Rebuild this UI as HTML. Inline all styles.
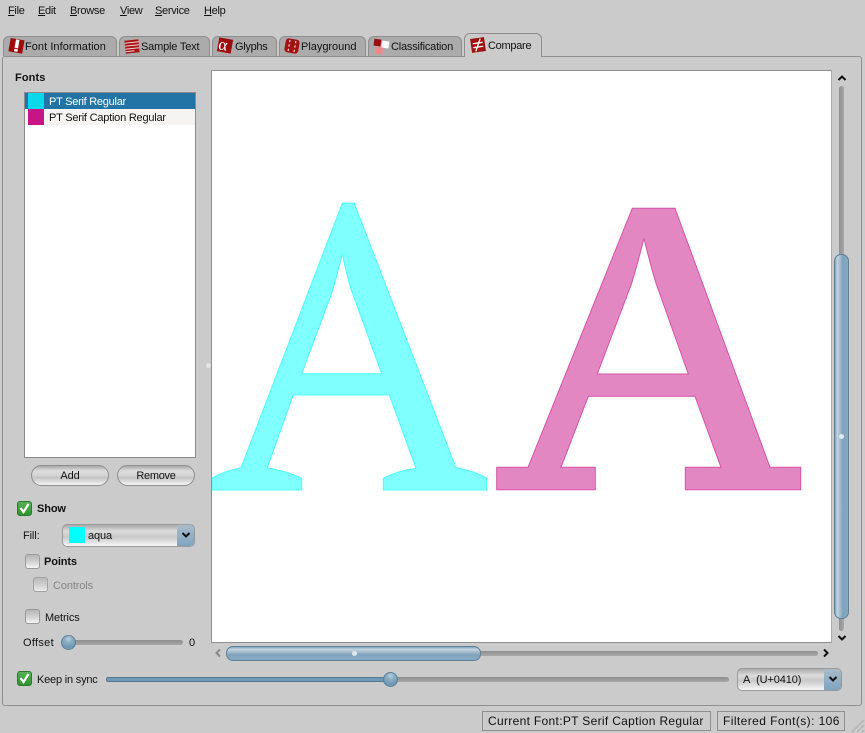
<!DOCTYPE html>
<html><head><meta charset="utf-8">
<style>
html,body{margin:0;padding:0;background:#cbcbcb;}
#r{position:relative;width:865px;height:733px;overflow:hidden;background:#cbcbcb;font-family:"Liberation Sans",sans-serif;font-size:11px;color:#111;letter-spacing:-.12px;}
#r div,#r span.a{position:absolute;}
.t{white-space:nowrap;line-height:14px;}
.m{top:4px;letter-spacing:-.3px;}
u{text-decoration:underline;}
.tab{top:36px;height:20px;background:#ababab;border:1px solid #8e8e8e;border-bottom:none;border-radius:6px 6px 0 0;box-sizing:border-box;}
.btn{height:21px;border:1px solid #8f8f8f;border-radius:11px;box-sizing:border-box;background:linear-gradient(#a9a9a9 0,#dcdcdc 25%,#d4d4d4 50%,#c2c2c2 60%,#f4f4f4 100%);text-align:center;line-height:20px;}
.cb{width:15px;height:15px;border:1px solid #999;border-radius:3px;box-sizing:border-box;background:linear-gradient(#b5b5b5,#d0d0d0 50%,#f4f4f4);}
.cbg{width:15px;height:15px;border:1px solid #2c7a2c;border-radius:3px;box-sizing:border-box;background:linear-gradient(#58b058,#2d942d);}
.bl{font-weight:bold;}
.combo{border:1px solid #9a9a9a;border-radius:5px;box-sizing:border-box;background:linear-gradient(#a9a9a9 0,#dcdcdc 30%,#c8c8c8 55%,#f6f6f6 100%);overflow:hidden;}
.cbtn{right:0;top:0;bottom:0;width:17px;background:linear-gradient(#a9bccb,#7fa4bf);}
.tr{background:linear-gradient(#8d8d8d,#a7a7a7);border-radius:3px;}
.knob{width:15px;height:15px;border-radius:50%;border:1px solid #5f8299;box-sizing:border-box;background:radial-gradient(circle at 50% 22%,#b9cfdd 0,#8fb0c5 30%,#6f97b2 70%,#7ea4bd 100%);}
</style></head><body>
<div id="r">
<div class="t m" style="left:8px"><u>F</u>ile</div>
<div class="t m" style="left:38px"><u>E</u>dit</div>
<div class="t m" style="left:70px"><u>B</u>rowse</div>
<div class="t m" style="left:120px"><u>V</u>iew</div>
<div class="t m" style="left:155px"><u>S</u>ervice</div>
<div class="t m" style="left:204px"><u>H</u>elp</div>

<!-- panel -->
<div style="left:2px;top:56px;width:860px;height:650px;border:1px solid #8f8f8f;border-radius:3px;box-sizing:border-box;"></div>

<!-- tabs -->
<div class="tab" style="left:3px;width:114px"></div>
<div class="tab" style="left:119px;width:91px"></div>
<div class="tab" style="left:212px;width:65px"></div>
<div class="tab" style="left:279px;width:87px"></div>
<div class="tab" style="left:368px;width:94px"></div>
<div class="tab" style="left:464px;top:33px;height:24px;width:78px;background:#cbcbcb;"></div>
<div style="left:465px;top:55px;width:76px;height:3px;background:#cbcbcb"></div>

<svg class="a" style="position:absolute;left:0;top:0" width="865" height="64">
<g transform="rotate(10 16 45.500)"><rect x="9.500" y="39" width="14" height="13.500" fill="#9c0e0e"/><rect x="15" y="39.500" width="3.500" height="8.500" fill="#fff"/><rect x="15" y="49" width="3.500" height="2.500" fill="#fff"/></g>
<g transform="rotate(-6 132 46.500)"><rect x="125" y="40" width="14" height="13" fill="#a81414"/><path d="M125 42.500h14M125 45.500h14M125 48.500h14M125 51h9" stroke="#f3d5d5" stroke-width="1"/></g>
<g transform="rotate(10 225 45.500)"><rect x="218" y="38.500" width="14" height="14" fill="#9c0e0e"/><text x="218.500" y="50.500" font-family="Liberation Serif,serif" font-size="17" fill="#fff">α</text></g>
<g transform="rotate(10 292 46)"><rect x="285" y="39" width="14" height="14" rx="3" fill="#a31212"/><path d="M288.500 41.500h1M294.500 41.500h1M288.500 46h1M294.500 46h1M288.500 50.500h1M294.500 50.500h1" stroke="#fff" stroke-width="2.200"/></g>
<g><rect x="374" y="39" width="7" height="7" fill="#9c0e0e" transform="rotate(8 377 42)"/><rect x="382" y="41" width="7" height="7" fill="#fff" transform="rotate(8 385 44)"/><rect x="376" y="47" width="7" height="7" fill="#f08a8a" transform="rotate(8 379 50)"/></g>
<g transform="rotate(-8 478 45)"><rect x="471" y="38" width="14" height="14" fill="#a01010"/><path d="M473 43h10M473 47h10M481 39l-6 12" stroke="#fff" stroke-width="1.300" fill="none"/></g>
</svg>

<div class="t" style="left:25px;top:40px;letter-spacing:.05px">Font Information</div>
<div class="t" style="left:141px;top:40px;letter-spacing:-.18px">Sample Text</div>
<div class="t" style="left:235px;top:40px;letter-spacing:-.3px">Glyphs</div>
<div class="t" style="left:301px;top:40px;letter-spacing:-.02px">Playground</div>
<div class="t" style="left:391px;top:40px;letter-spacing:-.2px">Classification</div>
<div class="t" style="left:488px;top:39px;letter-spacing:-.28px">Compare</div>

<!-- fonts list -->
<div class="t bl" style="left:15px;top:71px;letter-spacing:.1px">Fonts</div>
<div style="left:24px;top:92px;width:172px;height:366px;background:#fff;border:1px solid #8a8a8a;box-sizing:border-box;"></div>
<div style="left:25px;top:93px;width:170px;height:16px;background:#2274a6;"></div>
<div style="left:25px;top:109px;width:170px;height:16px;background:#f6f4f2;"></div>
<div style="left:28px;top:93px;width:16px;height:16px;background:#0bd8e8;"></div>
<div style="left:28px;top:109px;width:16px;height:16px;background:#c71585;"></div>
<div class="t" style="left:49px;top:95px;color:#fff;letter-spacing:-.26px">PT Serif Regular</div>
<div class="t" style="left:49px;top:111px;letter-spacing:-.22px">PT Serif Caption Regular</div>

<div class="btn" style="left:31px;top:465px;width:78px">Add</div>
<div class="btn" style="left:117px;top:465px;width:78px;letter-spacing:-.3px">Remove</div>

<div class="cbg" style="left:17px;top:501px"></div>
<svg style="position:absolute;left:17px;top:501px" width="15" height="15"><path d="M3.500 7l3 4 5-8" stroke="#fff" stroke-width="2.200" fill="none"/></svg>
<div class="t bl" style="left:37px;top:502px">Show</div>
<div class="t" style="left:23px;top:529px">Fill:</div>
<div class="combo" style="left:62px;top:524px;width:133px;height:23px">
  <div class="cbtn"></div>
</div>
<div style="left:69px;top:527px;width:16px;height:16px;background:#00ffff"></div>
<div class="t" style="left:88px;top:529px">aqua</div>
<svg style="position:absolute;left:180px;top:531px" width="12" height="8"><path d="M2.500 2l3.500 3.500 3.500-3.500" stroke="#111" stroke-width="2" fill="none"/></svg>

<div class="cb" style="left:25px;top:554px"></div>
<div class="t bl" style="left:44px;top:555px">Points</div>
<div class="cb" style="left:33px;top:577px;opacity:.8"></div>
<div class="t" style="left:53px;top:579px;color:#868686">Controls</div>
<div class="cb" style="left:25px;top:609px"></div>
<div class="t" style="left:45px;top:611px">Metrics</div>
<div class="t" style="left:23px;top:636px;letter-spacing:.3px">Offset</div>
<div class="tr" style="left:66px;top:640px;width:117px;height:5px"></div>
<div class="knob" style="left:61px;top:635px"></div>
<div class="t" style="left:189px;top:636px">0</div>

<!-- canvas -->
<div style="left:211px;top:70px;width:621px;height:573px;background:#fff;border:1px solid #8f8f8f;border-right-color:#b0b0b0;box-sizing:border-box;"></div>
<div style="left:206px;top:363px;width:5px;height:5px;border-radius:50%;background:#e4e4e4"></div>
<svg style="position:absolute;left:212px;top:71px" width="619" height="571" viewBox="212 71 619 571">
<path fill-rule="evenodd" fill="#80ffff" stroke="#4dfdfd" stroke-width="1" d="M342.300 203.300H354.300L456 467.700Q475 471 486.700 478.300V490H383.300V478.300Q397 471 416 468.300L389.300 395H293.300L267.300 467.700Q287 471 301.700 478.300V490H211.700V478.300Q224 471 241 467.700ZM342.300 254Q338 272 331.700 293.300L301.700 373.700H381.700L350.700 288.300Q346 272 342.300 254Z"/>
<path fill-rule="evenodd" fill="#e287c2" stroke="#d554a8" stroke-width="1" d="M632.300 208.300H675L770 467.300H800.700V489.700H685.300V467.300H721L695 396.300H588.300L561 467.300H595.300V489.700H496.700V467.300H528ZM644 238.300Q638 262 631.700 283.300L597.300 374H688.300L655.700 282.300Q649 260 644 238.300Z"/>
</svg>

<!-- vertical scrollbar -->
<div style="left:839px;top:86px;width:5px;height:545px;background:linear-gradient(90deg,#8e8e8e,#a9a9a9);border-radius:3px"></div>
<div style="left:834px;top:254px;width:15px;height:365px;border:1px solid #5f8299;border-radius:7px;box-sizing:border-box;background:linear-gradient(90deg,#7ea4bd 0,#c5d3dd 18%,#a9c0d0 35%,#7ea4bd 60%,#86a9c1 100%);"></div>
<div style="left:839px;top:434px;width:5px;height:5px;border-radius:50%;background:#dfe8ee"></div>
<svg style="position:absolute;left:836px;top:74px" width="12" height="8"><path d="M2.500 6L6 2.500 9.500 6" stroke="#111" stroke-width="2" fill="none"/></svg>
<svg style="position:absolute;left:836px;top:634px" width="12" height="8"><path d="M2.500 2L6 5.500 9.500 2" stroke="#111" stroke-width="2" fill="none"/></svg>

<!-- horizontal scrollbar -->
<div style="left:230px;top:651px;width:588px;height:5px;background:linear-gradient(#8e8e8e,#a9a9a9);border-radius:3px"></div>
<div style="left:226px;top:646px;width:255px;height:15px;border:1px solid #5f8299;border-radius:7px;box-sizing:border-box;background:linear-gradient(#7ea4bd 0,#c5d3dd 18%,#a9c0d0 35%,#7ea4bd 60%,#86a9c1 100%);"></div>
<div style="left:352px;top:651px;width:5px;height:5px;border-radius:50%;background:#dfe8ee"></div>
<svg style="position:absolute;left:214px;top:647px" width="8" height="12"><path d="M6 2.500L2.500 6 6 9.500" stroke="#8a8a8a" stroke-width="2" fill="none"/></svg>
<svg style="position:absolute;left:822px;top:647px" width="8" height="12"><path d="M2 2.500L5.500 6 2 9.500" stroke="#111" stroke-width="2" fill="none"/></svg>

<!-- keep in sync -->
<div class="cbg" style="left:17px;top:671px"></div>
<svg style="position:absolute;left:17px;top:671px" width="15" height="15"><path d="M3.500 7l3 4 5-8" stroke="#fff" stroke-width="2.200" fill="none"/></svg>
<div class="t" style="left:37px;top:673px;letter-spacing:-.2px">Keep in sync</div>
<div class="tr" style="left:106px;top:677px;width:623px;height:5px"></div>
<div style="left:106px;top:677px;width:285px;height:5px;background:#6f9ab8;border:1px solid #55788f;box-sizing:border-box;border-radius:2px"></div>
<div class="knob" style="left:383px;top:672px"></div>
<div class="combo" style="left:737px;top:668px;width:105px;height:23px"><div class="cbtn"></div></div>
<div class="t" style="left:743px;top:673px">A&nbsp; (U+0410)</div>
<svg style="position:absolute;left:827px;top:675px" width="12" height="8"><path d="M2.500 2L6 5.500 9.500 2" stroke="#111" stroke-width="2" fill="none"/></svg>

<!-- status bar -->
<div class="t" style="left:482px;top:711px;width:229px;height:20px;border:1px solid #8f8f8f;box-sizing:border-box;font-size:12px;letter-spacing:.32px;line-height:19px;padding-left:5px;">Current Font:PT Serif Caption Regular</div>
<div class="t" style="left:717px;top:711px;width:128px;height:20px;border:1px solid #8f8f8f;box-sizing:border-box;font-size:12px;letter-spacing:.42px;line-height:19px;padding-left:5px;">Filtered Font(s): 106</div>
<svg style="position:absolute;left:850px;top:718px" width="15" height="15"><path d="M14 2L2 14M14 7l-7 7M14 12l-2 2" stroke="#b5b5b5" stroke-width="1.500"/></svg>
</div>
</body></html>
